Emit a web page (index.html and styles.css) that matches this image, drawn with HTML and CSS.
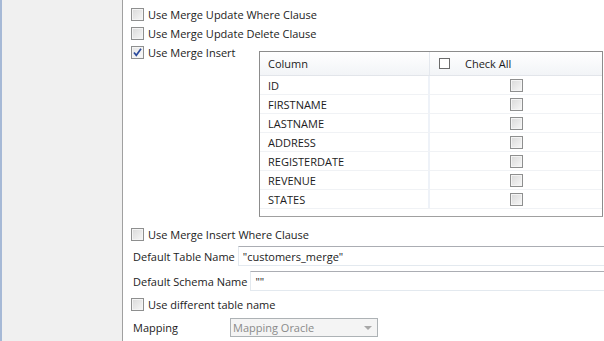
FILE: index.html
```html
<!DOCTYPE html>
<html lang="en">
<head>
    <meta charset="UTF-8">
    <title>Merge Options</title>
    <link rel="stylesheet" href="styles.css">
</head>
<body>
    <div class="sidebar"></div>

    <div class="main">
        <!-- Merge update options -->
        <label class="check-row">
            <span class="box"></span>
            <span>Use Merge Update Where Clause</span>
        </label>
        <label class="check-row">
            <span class="box"></span>
            <span>Use Merge Update Delete Clause</span>
        </label>

        <!-- Merge insert with column table -->
        <div class="insert-row">
            <label class="check-row insert-check">
                <span class="box checked">
                    <svg width="11" height="11" viewBox="0 0 11 11"><path d="M2 5.5 L4.3 8.3 L9 1.8" fill="none" stroke="#2b4a9c" stroke-width="1.7"/></svg>
                </span>
                <span>Use Merge Insert</span>
            </label>

            <div class="columns-table">
                <div class="table-head">
                    <div class="cell">Column</div>
                    <div class="cell head-check"><span class="mini-box"></span><span>Check All</span></div>
                </div>
                <div class="table-row"><div class="cell">ID</div><div class="cell center"><span class="box"></span></div></div>
                <div class="table-row"><div class="cell">FIRSTNAME</div><div class="cell center"><span class="box"></span></div></div>
                <div class="table-row"><div class="cell">LASTNAME</div><div class="cell center"><span class="box"></span></div></div>
                <div class="table-row"><div class="cell">ADDRESS</div><div class="cell center"><span class="box"></span></div></div>
                <div class="table-row"><div class="cell">REGISTERDATE</div><div class="cell center"><span class="box"></span></div></div>
                <div class="table-row"><div class="cell">REVENUE</div><div class="cell center"><span class="box"></span></div></div>
                <div class="table-row"><div class="cell">STATES</div><div class="cell center"><span class="box"></span></div></div>
            </div>
        </div>

        <label class="check-row after-table">
            <span class="box"></span>
            <span>Use Merge Insert Where Clause</span>
        </label>

        <div class="field-row table-name">
            <span class="field-label">Default Table Name</span>
            <div class="text-input">"customers_merge"</div>
        </div>
        <div class="field-row schema-name">
            <span class="field-label">Default Schema Name</span>
            <div class="text-input">""</div>
        </div>

        <label class="check-row diff-name">
            <span class="box"></span>
            <span>Use different table name</span>
        </label>

        <div class="field-row mapping">
            <span class="field-label mapping-label">Mapping</span>
            <div class="combo">
                <span>Mapping Oracle</span>
                <span class="combo-arrow"></span>
            </div>
        </div>
    </div>
</body>
</html>
```

FILE: styles.css
```css
/* General */
body, html {
    margin: 0;
    padding: 0;
    height: 100%;
    overflow: hidden;
    font-family: "Open Sans", "Noto Sans", sans-serif;
    font-size: 11px;
    color: #1c1c1c;
    background-color: #fff;
}

body {
    display: flex;
}

.sidebar {
    width: 120px;
    flex-shrink: 0;
    background-color: #f0f0f0;
    border-left: 2px solid #a6b9d6;
    border-right: 1px solid #a0a0a0;
}

.main {
    flex: 1;
    display: flex;
    flex-direction: column;
    padding: 5px 0 0 8px;
    min-width: 0;
}

/* Checkboxes */
.check-row {
    display: flex;
    align-items: center;
    height: 19px;
    gap: 4px;
    white-space: nowrap;
}

.box {
    display: inline-flex;
    align-items: center;
    justify-content: center;
    box-sizing: border-box;
    width: 13px;
    height: 13px;
    border: 1px solid #8e8f8f;
    background: linear-gradient(135deg, #d9d9d9, #f7f7f7);
    box-shadow: inset 0 0 0 1px #f4f4f4;
    flex-shrink: 0;
}

.box.checked {
    background: linear-gradient(135deg, #e4e4e4, #fbfbfb);
}

.mini-box {
    display: inline-block;
    box-sizing: border-box;
    width: 11px;
    height: 11px;
    border: 1px solid #6b6b6b;
    background-color: #fff;
}

/* Insert row with table */
.insert-row {
    display: flex;
    align-items: flex-start;
}

.insert-check {
    width: 128px;
    flex-shrink: 0;
}

.columns-table {
    box-sizing: border-box;
    width: 344px;
    height: 166px;
    margin-top: 8px;
    border: 1px solid #8c8c8c;
    border-bottom-color: #a0a0a0;
    overflow: hidden;
}

.table-head {
    display: grid;
    grid-template-columns: 170px 1fr;
    height: 24px;
    box-sizing: border-box;
    background: linear-gradient(#ffffff, #f2f4f7);
    border-bottom: 1px solid #e2e5ea;
}

.table-head .cell {
    display: flex;
    align-items: center;
    padding-left: 8px;
    border-right: 1px solid #e4e8ee;
}

.table-head .cell:last-child {
    border-right: none;
}

.table-head .head-check {
    gap: 15px;
    padding-left: 9px;
}

.table-row {
    display: grid;
    grid-template-columns: 170px 1fr;
    height: 19px;
    box-sizing: border-box;
    border-bottom: 1px solid #f0f2f5;
}

.table-row .cell {
    display: flex;
    align-items: center;
    padding-left: 8px;
    border-right: 2px solid #eef2f8;
}

.table-row .cell.center {
    justify-content: center;
    padding-left: 0;
    border-right: none;
}

/* Fields */
.after-table {
    margin-top: 8px;
}

.field-row {
    display: flex;
    align-items: center;
    height: 20px;
    white-space: nowrap;
}

.field-label {
    padding-left: 2px;
    margin-right: 3px;
}

.table-name {
    margin-top: 2px;
}

.schema-name {
    margin-top: 5px;
}

.diff-name {
    margin-top: 4px;
}

.text-input {
    flex: 1;
    height: 20px;
    box-sizing: border-box;
    padding: 1px 0 0 4px;
    border: 1px solid #e3e9ef;
    border-top-color: #abadb3;
    border-right: none;
    display: flex;
    align-items: center;
}

.mapping {
    margin-top: 4px;
    height: 19px;
}

.mapping-label {
    width: 94px;
}

.combo {
    box-sizing: border-box;
    width: 148px;
    height: 19px;
    display: flex;
    align-items: center;
    justify-content: space-between;
    padding: 0 5px 0 2px;
    background-color: #f4f4f4;
    border: 1px solid #adb2b5;
    color: #8a8a8a;
}

.combo-arrow {
    width: 0;
    height: 0;
    border-left: 4px solid transparent;
    border-right: 4px solid transparent;
    border-top: 4px solid #a8a8a8;
}
```
